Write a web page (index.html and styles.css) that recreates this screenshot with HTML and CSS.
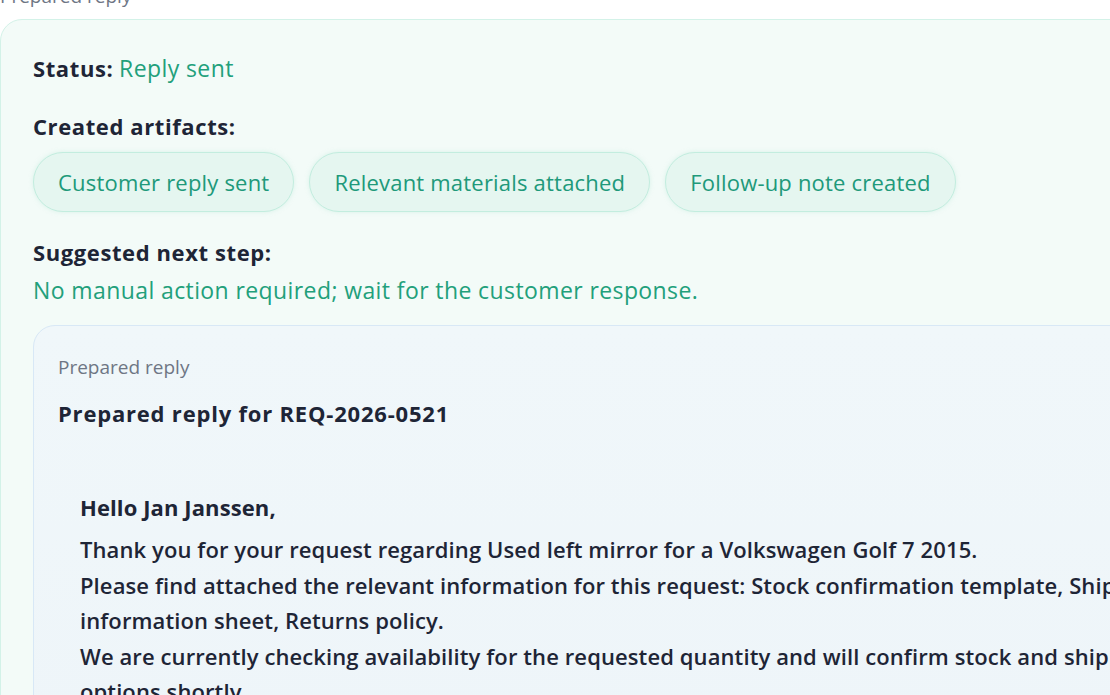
FILE: index.html
```html
<!DOCTYPE html>
<html>
<head>
  <title>Request REQ-2026-0521</title>
  <link rel="stylesheet" href="styles.css">
</head>
<body>
  <div class="panel">
    <div class="panel-label">Prepared reply</div>

    <!-- Outcome of the automated run -->
    <div class="result-card">
      <p class="status"><b>Status:</b> <span class="ok">Reply sent</span></p>

      <h4 class="section-title">Created artifacts:</h4>
      <div class="chips">
        <span class="chip">Customer reply sent</span>
        <span class="chip">Relevant materials attached</span>
        <span class="chip">Follow-up note created</span>
      </div>

      <div class="next-step">
        <h4 class="section-title">Suggested next step:</h4>
        <p class="ok">No manual action required; wait for the customer response.</p>
      </div>

      <!-- Reply text as it was sent -->
      <div class="reply-card">
        <div class="reply-label">Prepared reply</div>
        <h3 class="reply-title">Prepared reply for REQ-2026-0521</h3>
        <div class="reply-body">
          <p class="greeting">Hello Jan Janssen,</p>
          <p class="message">Thank you for your request regarding Used left mirror for a Volkswagen Golf 7 2015.
Please find attached the relevant information for this request: Stock confirmation template, Shipping
information sheet, Returns policy.
We are currently checking availability for the requested quantity and will confirm stock and shipping
options shortly.</p>
        </div>
      </div>
    </div>
  </div>
</body>
</html>
```

FILE: styles.css
```css
body {
  font-family: 'Open Sans', 'Noto Sans', sans-serif;
  background-color: #fff;
  color: #1e2536;
  margin: 0;
  overflow: hidden;
}
.panel {
  width: 1360px;
  margin-top: -17px;
}
.panel-label {
  font-size: 19px;
  line-height: 26px;
  color: #6e7684;
  margin-bottom: 10px;
}
.result-card {
  background-color: #f3fbf8;
  border: 1px solid #d3f2e8;
  border-radius: 22px;
  padding: 32px 32px 40px 32px;
}
.status {
  margin: 0;
  font-size: 22px;
  line-height: 32px;
}
.status b {
  font-weight: 700;
  letter-spacing: 0.6px;
}
.ok {
  color: #22a07b;
  font-size: 23px;
  font-weight: 500;
  letter-spacing: 0.4px;
}
.section-title {
  margin: 26px 0 0 0;
  font-size: 22px;
  line-height: 32px;
  font-weight: 700;
  letter-spacing: 0.6px;
}
.chips {
  display: flex;
  gap: 15px;
  margin-top: 10px;
}
.chip {
  background-color: #e5f6f0;
  border: 1px solid #c3eddf;
  border-radius: 30px;
  padding: 0 24px;
  height: 58px;
  line-height: 58px;
  font-size: 22px;
  font-weight: 500;
  letter-spacing: 0.2px;
  color: #20997a;
  box-shadow: 0 0 4px rgba(190, 235, 220, 0.5);
}
.next-step {
  margin-top: 24px;
}
.next-step .section-title {
  margin: 0;
}
.next-step p {
  margin: 6px 0 0 0;
  line-height: 32px;
}
.reply-card {
  margin-top: 19px;
  background: linear-gradient(180deg, #f0f7fa 0%, #eef5f9 100%);
  border: 1px solid #d8e8f6;
  border-radius: 22px;
  padding: 27px 24px 30px 24px;
}
.reply-label {
  font-size: 19px;
  line-height: 28px;
  color: #6e7684;
}
.reply-title {
  margin: 16px 0 0 0;
  font-size: 22px;
  line-height: 32px;
  font-weight: 700;
  letter-spacing: 0.8px;
}
.reply-body {
  padding: 60px 22px 0 22px;
}
.greeting {
  margin: 0;
  font-weight: 700;
  font-size: 22px;
  line-height: 36px;
  letter-spacing: 0.1px;
}
.message {
  margin: 7px 0 0 0;
  white-space: pre-line;
  font-size: 22px;
  line-height: 35.5px;
  font-weight: 600;
  letter-spacing: 0.1px;
}
```
